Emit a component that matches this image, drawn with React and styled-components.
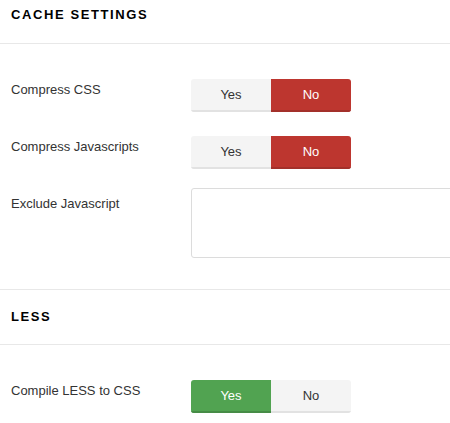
import React from 'react';
import styled, {createGlobalStyle} from 'styled-components';

const GlobalStyle = createGlobalStyle`
    body {
        margin: 0;
        background: #fff;
        font-family: "Liberation Sans", Arial, sans-serif;
        font-size: 13px;
        color: #333;
        overflow: hidden;
    }
`;

const Page = styled.div`
    width: 450px;
    overflow: hidden;
`;

const SectionHeader = styled.h3`
    margin: 0;
    padding: ${p => p.$top}px 11px 0;
    height: ${p => p.$height}px;
    box-sizing: border-box;
    border-bottom: 1px solid #e8e8e8;
    font-size: 13px;
    line-height: 18px;
    font-weight: bold;
    letter-spacing: 1.6px;
    color: #000;
    text-transform: uppercase;
`;

const Section = styled.div`
    padding: 35px 0 0;
    border-bottom: ${p => (p.$last ? 'none' : '1px solid #e8e8e8')};
    padding-bottom: ${p => p.$bottom}px;
`;

const Row = styled.div`
    display: flex;
    align-items: flex-start;
    padding-left: 11px;
    margin-bottom: ${p => p.$gap || 0}px;
`;

const Label = styled.label`
    width: 180px;
    flex-shrink: 0;
    padding-top: ${p => p.$top || 2}px;
    line-height: 18px;
    color: #333;
`;

const Toggle = styled.div`
    display: flex;
    flex-shrink: 0;
    width: 160px;
    border-radius: 3px;
    overflow: hidden;
`;

const colors = {
    off: {bg: '#f4f4f4', edge: '#e2e2e2', fg: '#333'},
    danger: {bg: '#bd362f', edge: '#a3302a', fg: '#fff'},
    success: {bg: '#51a351', edge: '#468c46', fg: '#fff'},
};

const Choice = styled.button`
    width: 80px;
    height: 33px;
    padding: 0;
    border: none;
    border-bottom: 2px solid ${p => colors[p.$tone].edge};
    background: ${p => colors[p.$tone].bg};
    color: ${p => colors[p.$tone].fg};
    font-family: inherit;
    font-size: 13px;
    line-height: 31px;
    cursor: pointer;
`;

const TextArea = styled.textarea`
    display: block;
    flex-shrink: 0;
    width: 300px;
    height: 70px;
    box-sizing: border-box;
    margin: 0;
    border: 1px solid #dcdcdc;
    border-radius: 3px;
    resize: none;
    font-family: inherit;
    font-size: 13px;
`;

const YesNo = ({value, onTone}) => (
    <Toggle>
        <Choice $tone={value ? onTone : 'off'}>Yes</Choice>
        <Choice $tone={value ? 'off' : onTone}>No</Choice>
    </Toggle>
);

export default function App() {
    return (
        <Page>
            <GlobalStyle />
            <SectionHeader $top={6} $height={44}>Cache Settings</SectionHeader>
            <Section $bottom={31}>
                <Row $gap={24}>
                    <Label>Compress CSS</Label>
                    <YesNo value={false} onTone="danger" />
                </Row>
                <Row $gap={19}>
                    <Label>Compress Javascripts</Label>
                    <YesNo value={false} onTone="danger" />
                </Row>
                <Row>
                    <Label $top={7}>Exclude Javascript</Label>
                    <TextArea />
                </Row>
            </Section>
            <SectionHeader $top={18} $height={55}>Less</SectionHeader>
            <Section $last $bottom={20}>
                <Row>
                    <Label>Compile LESS to CSS</Label>
                    <YesNo value={true} onTone="success" />
                </Row>
            </Section>
        </Page>
    );
}
